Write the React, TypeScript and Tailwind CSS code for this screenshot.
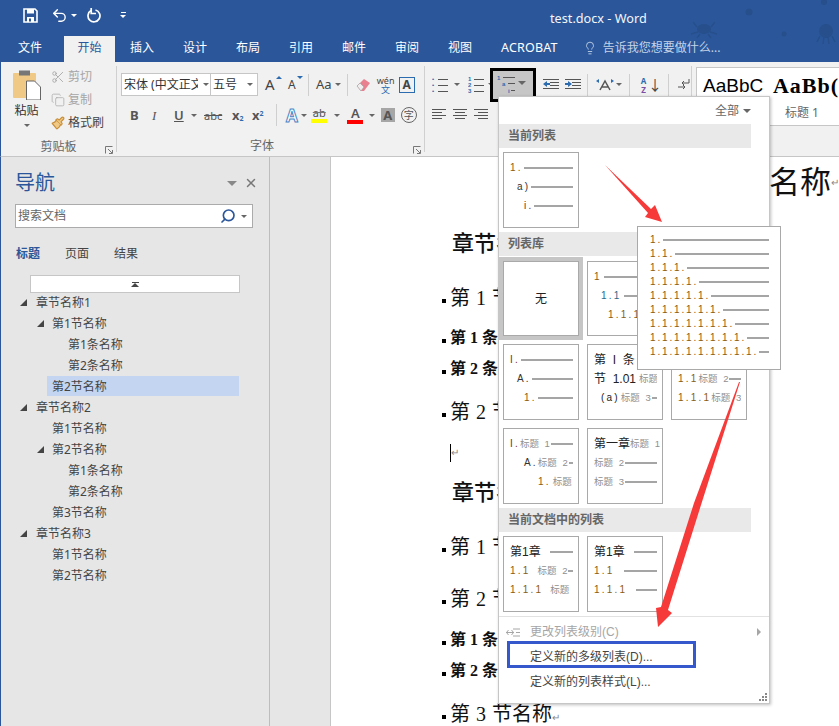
import React from 'react';
import { Undo2, Search, X, Lightbulb, Scissors, Copy, Paintbrush } from 'lucide-react';

const tabs = ['插入', '设计', '布局', '引用', '邮件', '审阅', '视图'];

const tree = [
  { text: '章节名称1', level: 'pl-[35px]', arrow: 'left-[19px]' },
  { text: '第1节名称', level: 'pl-[51px]', arrow: 'left-[36px]' },
  { text: '第1条名称', level: 'pl-[67px]' },
  { text: '第2条名称', level: 'pl-[67px]' },
  { text: '第2节名称', level: 'pl-[51px]', selected: true },
  { text: '章节名称2', level: 'pl-[35px]', arrow: 'left-[19px]' },
  { text: '第1节名称', level: 'pl-[51px]' },
  { text: '第2节名称', level: 'pl-[51px]', arrow: 'left-[36px]' },
  { text: '第1条名称', level: 'pl-[67px]' },
  { text: '第2条名称', level: 'pl-[67px]' },
  { text: '第3节名称', level: 'pl-[51px]' },
  { text: '章节名称3', level: 'pl-[35px]', arrow: 'left-[19px]' },
  { text: '第1节名称', level: 'pl-[51px]' },
  { text: '第2节名称', level: 'pl-[51px]' },
];

const Caret = ({ className = '' }: { className?: string }) => (
  <span className={`inline-block w-0 h-0 border-x-[3px] border-x-transparent border-t-[3px] border-t-[#666] ${className}`} />
);

const VDiv = ({ className = '' }: { className?: string }) => <span className={`w-px h-[22px] bg-[#cfcfcf] ${className}`} />;

const Launcher = ({ className = '' }: { className?: string }) => (
  <svg width="8" height="8" viewBox="0 0 8 8" className={`absolute ${className}`}>
    <path d="M0.5 7.5V0.5H7.5M3 3l4 4M7.5 4v3.5H4" fill="none" stroke="#777" />
  </svg>
);

// three short lines with a marker in front, for the list buttons
const ListIcon = ({ marks, color = '#2b6cb0' }: { marks: string[]; color?: string }) => (
  <svg width="16" height="17" viewBox="0 0 16 17">
    {marks.map((m, i) => (
      <g key={i}>
        <text x="0" y={5 + i * 6} fontSize="6" fontWeight="bold" fill={color} fontFamily="Liberation Sans">{m}</text>
        <rect x="6" y={3 + i * 6} width="10" height="1" fill="#555" />
      </g>
    ))}
  </svg>
);

const AlignIcon = ({ rows }: { rows: [number, number][] }) => (
  <svg width="15" height="11" viewBox="0 0 15 11">
    {rows.map(([x, w], i) => <rect key={i} x={x} y={i * 3 + 1} width={w} height="1" fill="#555" />)}
  </svg>
);

const IndentIcon = ({ flip = false }: { flip?: boolean }) => (
  <svg width="16" height="13" viewBox="0 0 16 13">
    <rect x="0" y="1" width="16" height="1" fill="#555" />
    <rect x="7" y="4" width="9" height="1" fill="#555" />
    <rect x="7" y="7" width="9" height="1" fill="#555" />
    <rect x="0" y="10" width="16" height="1" fill="#555" />
    {flip ? <path d="M0 5h3V3l4 3-4 3V7H0z" fill="#2b6cb0" /> : <path d="M7 5H4V3L0 6l4 3V7h3z" fill="#2b6cb0" />}
  </svg>
);

const Row = ({ text, pad = '', mid, midGap = '', gap = 'ml-[1px]', color = 'text-[#8a5d10]', big = false, line = true }: { text: string; pad?: string; mid?: string; midGap?: string; gap?: string; color?: string; big?: boolean; line?: boolean }) => (
  <div className={`flex items-center h-[19px] whitespace-nowrap overflow-hidden ${pad}`}>
    <span className={`leading-none whitespace-pre ${big ? 'text-[12px]' : 'text-[10px] tracking-[2.2px]'} ${color}`}>{text}</span>
    {mid && <span className={`text-[9.5px] [word-spacing:3px] text-[#8f8f8f] leading-none ${midGap}`}>{mid}</span>}
    {line && <span className={`flex-1 min-w-0 h-[2px] bg-[#a5a5a5] ${gap}`} />}
  </div>
);

const Thumb = ({ children, className = '' }: { children?: React.ReactNode; className?: string }) => (
  <div className={`w-[76px] h-[76px] border border-[#a9a9a9] bg-white pl-[6px] pr-[5px] pt-[5px] ${className}`}>{children}</div>
);

const MenuHead = ({ children }: { children: React.ReactNode }) => (
  <div className="w-[252px] h-[24px] bg-[#e9e9e9] flex items-center pl-[9px] text-[12px] font-bold text-[#666]">{children}</div>
);

const Bullet = () => <span className="w-[4px] h-[4px] bg-black mr-[4px] mt-[6px] shrink-0" />;

const Return = () => <span className="text-[10px] text-[#888] font-normal leading-none self-end mb-1">↵</span>;

const DocH1 = ({ className = '' }: { className?: string }) => (
  <div className={`pl-[121px] text-[22px] leading-[26px] font-medium text-[#111] flex ${className}`}>章节名称<Return /></div>
);

const DocH2 = ({ n, className = '' }: { n: string; className?: string }) => (
  <div className={`pl-[111px] text-[20px] leading-[26px] text-[#111] flex items-center whitespace-pre [word-spacing:1px] ${className}`}><Bullet />第 {n} 节名称<Return /></div>
);

const DocH3 = ({ n, className = '' }: { n: string; className?: string }) => (
  <div className={`pl-[111px] text-[16px] leading-[22px] font-bold text-[#111] flex items-center whitespace-pre ${className}`}><Bullet />第 {n} 条名称<Return /></div>
);

const App: React.FC = () => {
  return (
    <div className="relative w-[839px] h-[726px] overflow-hidden bg-white font-['Noto_Sans','Noto_Sans_CJK_SC',sans-serif]">
      {/* title bar + tabs */}
      <div className="relative h-[62px] bg-[#2b579a] text-white">
        <div className="h-[36px] flex items-center pl-[23px] pb-[6px]">
          <svg width="15" height="15" viewBox="0 0 15 15">
            <path d="M1 1h11l2 2v11H1z" fill="none" stroke="#fff" strokeWidth="1.6" />
            <rect x="4" y="1" width="7" height="4.5" fill="#fff" />
            <rect x="4" y="9" width="7" height="5" fill="#fff" />
            <rect x="6" y="10.5" width="2" height="3" fill="#2b579a" />
          </svg>
          <Undo2 size={17} strokeWidth={2} className="ml-[13px]" />
          <Caret className="ml-[3px] border-t-white" />
          <svg width="15" height="15" viewBox="0 0 15 15" className="ml-[9px]">
            <path d="M5 2.6A6 6 0 1 0 9.5 2" fill="none" stroke="#fff" strokeWidth="1.7" />
            <path d="M5.2 0v5.5H10" fill="none" stroke="#fff" strokeWidth="1.7" />
          </svg>
          <span className="ml-[19px] flex flex-col items-center gap-[2px]">
            <span className="w-[5px] h-px bg-white" />
            <Caret className="border-t-white" />
          </span>
        </div>
        <div className="absolute left-[550px] top-[9px] text-[12.7px] leading-[18px] font-['Noto_Sans',sans-serif] text-[#f4f6fa]">test.docx - Word</div>
        <svg width="170" height="50" viewBox="0 0 170 50" className="absolute left-[669px] top-[0px]" fill="#264f8c">
          <circle cx="80" cy="12" r="3.5" />
          <circle cx="115" cy="34" r="2.5" />
          <ellipse cx="35" cy="29" rx="7" ry="5" />
          <path d="M24 22l4 5M46 22l-4 5M22 34l7-2M48 34l-7-2M28 38l3-4M42 38l-3-4" stroke="#264f8c" strokeWidth="1.5" />
          <circle cx="157" cy="31" r="7" />
          <path d="M151 36l-3 6M155 37l-1 7M159 37l1 7M163 36l3 6" stroke="#264f8c" strokeWidth="1.5" />
          <circle cx="155" cy="2" r="3" />
        </svg>
        <div className="h-[26px] flex items-stretch text-[12px] pl-[18px] pb-[2px]">
          <div className="flex items-center w-[46px]">文件</div>
          <div className="w-[51px] h-[26px] bg-[#f1f1f1] text-[#2b579a] flex items-center justify-center pb-[2px]">开始</div>
          <div className="flex items-center pl-[15px]">
            {tabs.map((t) => <span key={t} className="w-[53px]">{t}</span>)}
          </div>
          <span className="flex items-center text-[12.5px] tracking-[0.2px]">ACROBAT</span>
          <div className="flex items-center ml-[25px] text-[#c5d3e8]">
            <Lightbulb size={14} strokeWidth={1.5} />
            <span className="ml-[6px] text-[12px]">告诉我您想要做什么...</span>
          </div>
        </div>
      </div>

      {/* ribbon */}
      <div className="h-[95px] bg-[#f1f1f1] border-b border-[#c6c6c6] border-l border-l-[#2b579a] flex text-[#444]">
        {/* clipboard */}
        <div className="relative w-[116px] border-r border-[#d0d0d0] my-[4px] mr-0 shrink-0">
          <div className="flex h-[72px]">
            <div className="w-[46px] flex flex-col items-center pt-[4px] pl-[5px]">
              <svg width="29" height="30" viewBox="0 0 29 30">
                <rect x="1" y="3" width="23" height="25" rx="1" fill="#efc985" />
                <rect x="7" y="0.5" width="11" height="5" fill="#777" />
                <path d="M14.5 11h8l6 6v13h-14z" fill="#fff" stroke="#666" />
              </svg>
              <span className="text-[12px] leading-[16px] mt-[3px] text-[#333]">粘贴</span>
              <Caret className="mt-[5px]" />
            </div>
            <div className="flex flex-col pl-[4px] mt-[-1px] text-[12px] text-[#a6a6a6] leading-[23px]">
              <div className="flex items-center gap-[3px]"><Scissors size={14} strokeWidth={1.5} />剪切</div>
              <div className="flex items-center gap-[3px]"><Copy size={14} strokeWidth={1.2} />复制</div>
              <div className="flex items-center gap-[3px] text-[#444]"><Paintbrush size={14} className="text-[#c98f3a]" fill="#efc985" />格式刷</div>
            </div>
          </div>
          <div className="text-center text-[12px] leading-[16px] text-[#666] pt-[1px]">剪贴板</div>
          <Launcher className="right-[3px] bottom-[-2px]" />
        </div>

        {/* font */}
        <div className="relative w-[308px] border-r border-[#d0d0d0] my-[4px] shrink-0 pl-[4px]">
          <div className="flex items-center h-[23px] mt-[7px] text-[#444]">
            <div className="w-[90px] h-[23px] bg-white border border-[#c6c6c6] flex items-center pl-[2px] text-[12px] text-[#333] overflow-hidden whitespace-nowrap">
              <span className="w-[74px] overflow-hidden">宋体 (中文正文)</span><Caret className="ml-[5px]" />
            </div>
            <div className="w-[47px] h-[23px] bg-white border border-[#c6c6c6] border-l-0 flex items-center pl-[2px] text-[12px] text-[#333] justify-between pr-[4px]">
              五号<Caret />
            </div>
            <span className="ml-[7px] text-[15px] w-[15px] leading-none relative">A<span className="absolute right-[-2px] top-[-1px] w-0 h-0 border-x-[3px] border-x-transparent border-b-[3px] border-b-[#2b6cb0]" /></span>
            <span className="ml-[8px] text-[12px] w-[15px] leading-none relative">A<span className="absolute right-[0px] top-[-3px] w-0 h-0 border-x-[3px] border-x-transparent border-t-[3px] border-t-[#2b6cb0]" /></span>
            <VDiv className="ml-[5px]" />
            <span className="ml-[7px] text-[13px]">Aa</span>
            <Caret className="ml-[3px]" />
            <VDiv className="ml-[6px]" />
            <svg width="15" height="15" viewBox="0 0 15 15" className="ml-[8px]">
              <path d="M1 9l7-7 6 4-6 8H5z" fill="#e8808f" />
              <path d="M1 9l3-3 4 4-3 4z" fill="#eee" stroke="#999" strokeWidth=".6" />
            </svg>
            <span className="ml-[7px] w-[16px] flex flex-col items-center leading-none">
              <span className="text-[9px] text-[#444] leading-[9px]">wén</span>
              <span className="text-[9px] text-[#2b6cb0] leading-[9px]">文</span>
            </span>
            <span className="ml-[5px] w-[16px] h-[16px] border border-[#2b6cb0] flex items-center justify-center text-[12px] font-bold leading-none">A</span>
          </div>
          <div className="flex items-center h-[24px] mt-[7px] text-[#555]">
            <span className="ml-[9px] w-[22px] text-[13px] font-bold leading-none">B</span>
            <span className="w-[22px] text-[13px] italic font-['Liberation_Serif',serif] leading-none">I</span>
            <span className="w-[17px] text-[13px] underline font-semibold leading-none">U</span>
            <Caret />
            <span className="ml-[7px] w-[20px] text-[11px] line-through leading-none">abc</span>
            <span className="ml-[8px] w-[20px] text-[13px] font-bold leading-none">x<sub className="text-[7px] text-[#2b6cb0]">2</sub></span>
            <span className="w-[18px] text-[13px] font-bold leading-none">x<sup className="text-[7px] text-[#2b6cb0]">2</sup></span>
            <VDiv className="ml-[6px]" />
            <span className="ml-[9px] text-[17px] font-bold leading-none text-white [-webkit-text-stroke:1px_#4a86c5]">A</span>
            <Caret className="ml-[3px]" />
            <span className="ml-[4px] w-[17px] flex flex-col items-center leading-none">
              <span className="text-[11px] leading-[12px] line-through decoration-[#777]">ab</span>
              <span className="w-[16px] h-[4px] bg-[#ffff00]" />
            </span>
            <Caret className="ml-[6px]" />
            <span className="ml-[7px] w-[17px] flex flex-col items-center leading-none">
              <span className="text-[13px] font-semibold leading-[12px]">A</span>
              <span className="w-[16px] h-[4px] bg-[#ff0000] mt-[1px]" />
            </span>
            <Caret className="ml-[5px]" />
            <span className="ml-[6px] w-[14px] h-[14px] bg-[#a6a6a6] flex items-center justify-center text-[13px] font-bold leading-none">A</span>
            <span className="ml-[6px] w-[16px] h-[16px] rounded-full border border-[#666] flex items-center justify-center text-[10px] leading-none">字</span>
          </div>
          <div className="absolute left-[133px] bottom-[-2px] text-[12px] leading-[16px] text-[#666]">字体</div>
          <Launcher className="right-[3px] bottom-[-2px]" />
        </div>

        {/* paragraph */}
        <div className="w-[267px] border-r border-[#d0d0d0] my-[4px] shrink-0 pl-[7px]">
          <div className="flex items-center h-[23px] mt-[7px]">
            <ListIcon marks={['•', '•', '•']} />
            <Caret className="ml-[6px]" />
            <span className="ml-[8px]"><ListIcon marks={['1', '2', '3']} /></span>
            <Caret className="ml-[4px]" />
            <span className="ml-[49px]"><IndentIcon /></span>
            <span className="ml-[6px]"><IndentIcon flip /></span>
            <VDiv className="ml-[6px]" />
            <svg width="20" height="16" viewBox="0 0 20 16" className="ml-[7px]">
              <path d="M5 13L10 4l5 9M7 10h6" fill="none" stroke="#555" strokeWidth="1.5" />
              <path d="M1 4l3-2v4zM19 4l-3-2v4z" fill="#2b6cb0" />
            </svg>
            <Caret className="ml-[1px]" />
            <VDiv className="ml-[7px]" />
            <span className="ml-[9px] w-[9px] flex flex-col items-center text-[8px] font-bold leading-[9px]">
              <span className="text-[#2b6cb0]">A</span><span className="text-[#7b4ea3]">Z</span>
            </span>
            <span className="text-[14px] leading-none">↓</span>
            <VDiv className="ml-[6px]" />
            <svg width="13" height="14" viewBox="0 0 13 14" className="ml-[8px]">
              <path d="M12 1v4H5M5 5l2-2M5 5l2 2" fill="none" stroke="#555" />
              <path d="M1 9h7M8 9l-2-2M8 9l-2 2" fill="none" stroke="#555" />
            </svg>
          </div>
          <div className="flex items-center h-[24px] mt-[5px] gap-[6px]">
            <AlignIcon rows={[[0, 14], [0, 10], [0, 14], [0, 10]]} />
            <AlignIcon rows={[[0, 14], [2, 10], [0, 14], [2, 10]]} />
            <AlignIcon rows={[[0, 14], [4, 10], [0, 14], [4, 10]]} />
          </div>
        </div>

        {/* styles gallery */}
        <div className="pl-[4px] pt-[5px] flex-1 overflow-hidden">
          <div className="h-[59px] bg-white border border-[#c6c6c6] border-r-0 flex whitespace-nowrap overflow-hidden">
            <div className="w-[79px] pl-[6px] pt-[4px]">
              <div className="text-[19px] leading-[28px] text-black font-['Liberation_Sans',sans-serif]">AaBbC</div>
            </div>
            <div className="pt-[4px]">
              <div className="text-[22px] leading-[28px] font-bold tracking-[1px] text-black font-['Liberation_Serif',serif]">AaBb(</div>
              <div className="text-[12px] leading-[16px] pl-[12px] mt-[5px] text-[#666]">标题 1</div>
            </div>
          </div>
        </div>
      </div>

      {/* body */}
      <div className="h-[569px] flex border-l border-l-[#2b579a]">
        <div className="relative w-[269px] h-full bg-[#e6e6e6] border-r border-[#bdbdbd] shrink-0">
          <div className="flex items-center h-[37px] pl-[14px] pt-[15px] pr-[11px] justify-between text-[20px] text-[#2b579a]">
            <span className="leading-none">导航</span>
            <span className="flex items-center gap-[7px] text-[#777]">
              <Caret className="border-x-[5px] border-t-[5px] border-t-[#888]" />
              <X size={14} strokeWidth={2.5} />
            </span>
          </div>
          <div className="ml-[14px] mt-[10px] w-[238px] h-[24px] bg-white border border-[#ababab] flex items-center pl-[2px] text-[12px] text-[#666]">
            <span className="flex-1">搜索文档</span>
            <Search size={16} strokeWidth={2.5} className="text-[#2b579a] -scale-x-100" />
            <Caret className="mx-[5px]" />
          </div>
          <div className="flex items-center mt-[16px] pl-[15px] h-[20px] text-[12px] text-[#444]">
            <span className="w-[49px] font-bold text-[#2b579a]">标题</span>
            <span className="w-[49px]">页面</span>
            <span>结果</span>
          </div>
          <div className="ml-[29px] mt-[11px] w-[210px] h-[18px] bg-white border border-[#c6c6c6] flex flex-col items-center justify-center">
            <span className="w-[7px] h-px bg-[#444]" />
            <span className="w-0 h-0 border-x-[4px] border-x-transparent border-b-[4px] border-b-[#444]" />
          </div>
          <div className="text-[12px] text-[#444] mt-[-1px]">
            {tree.map((r, i) => (
              <div key={i} className={`relative h-[21px] flex items-center ${r.level}`}>
                {r.selected && <span className="absolute left-[46px] top-0 w-[192px] h-[20px] bg-[#c3d5f0]" />}
                {r.arrow && (
                  <svg width="7" height="7" viewBox="0 0 7 7" className={`absolute top-[7px] ${r.arrow}`}>
                    <path d="M7 0v7H0z" fill="#444" />
                  </svg>
                )}
                <span className="relative">{r.text}</span>
              </div>
            ))}
          </div>
        </div>

        {/* document */}
        <div className="flex-1 bg-[#e6e6e6] pl-[60px] overflow-hidden">
          <div className="h-full bg-white border-l border-[#c6c6c6] pl-0 font-['Liberation_Serif','Noto_Sans_CJK_SC',serif]">
            <div className="pl-[400px] pt-[10px] text-[31px] leading-[32px] text-[#111] flex whitespace-nowrap">
              <span className="ml-[38px]">名称</span><span className="text-[10px] text-[#888] self-end">↵</span>
            </div>
            <DocH1 className="mt-[32px]" />
            <DocH2 n="1" className="mt-[28px]" />
            <DocH3 n="1" className="mt-[16px]" />
            <DocH3 n="2" className="mt-[9px]" />
            <DocH2 n="2" className="mt-[19px]" />
            <div className="pl-[119px] mt-[19px] h-[18px] flex items-center">
              <span className="w-px h-[18px] bg-black" />
              <span className="text-[10px] text-[#888] leading-none">↵</span>
            </div>
            <DocH1 className="mt-[18px]" />
            <DocH2 n="1" className="mt-[28px]" />
            <DocH2 n="2" className="mt-[26px]" />
            <DocH3 n="1" className="mt-[17px]" />
            <DocH3 n="2" className="mt-[9px]" />
            <DocH2 n="3" className="mt-[19px]" />
          </div>
        </div>
      </div>

      {/* multilevel list button, highlighted */}
      <div className="absolute left-[490px] top-[68px] w-[46px] h-[34px] border-[3px] border-black bg-[#c6c6c6] flex items-start pt-[3px] pl-[4px]">
        <svg width="20" height="20" viewBox="0 0 20 20">
          <text x="0" y="6" fontSize="6" fontWeight="bold" fill="#2b6cb0" fontFamily="Liberation Sans">1</text>
          <rect x="6" y="3" width="12" height="1" fill="#555" />
          <text x="5" y="12" fontSize="6" fontWeight="bold" fill="#2b6cb0" fontFamily="Liberation Sans">a</text>
          <rect x="11" y="9" width="7" height="1" fill="#555" />
          <text x="11" y="19" fontSize="6" fontWeight="bold" fill="#2b6cb0" fontFamily="Liberation Sans">i</text>
          <rect x="14" y="16" width="4" height="1" fill="#555" />
        </svg>
        <Caret className="mt-[7px] ml-[1px] border-x-[4px] border-t-[4px] border-t-[#444]" />
      </div>

      {/* dropdown */}
      <div className="absolute left-[498px] top-[96px] w-[272px] h-[608px] bg-white border border-[#c6c6c6] shadow-[1px_1px_3px_rgba(0,0,0,0.25)] font-['Liberation_Sans','Noto_Sans_CJK_SC',sans-serif]">
        <div className="h-[27px] flex items-center justify-end pr-[18px] text-[12px] text-[#666] gap-[4px]">全部<Caret className="border-x-[4px] border-t-[4px]" /></div>
        <MenuHead>当前列表</MenuHead>
        <div className="pl-[4px] pt-[4px]">
          <Thumb>
            <Row text="1." />
            <Row text="a)" pad="pl-[7px]" color="text-[#333]" />
            <Row text="i." pad="pl-[14px]" color="text-[#7a2a1a]" />
          </Thumb>
        </div>
        <div className="mt-[4px]"><MenuHead>列表库</MenuHead></div>
        <div className="grid grid-cols-[76px_76px_76px] gap-x-2 gap-y-2 pl-[4px] pt-[5px]">
          <Thumb className="outline-4 outline-[#c6c6c6] flex items-center justify-center !p-0 !h-[75px]"><span className="text-[12px] text-[#222]">无</span></Thumb>
          <Thumb className="!h-[75px]">
            <Row text="1" gap="ml-[2px]" color="text-[#8a5d10]" />
            <Row text="1.1" pad="pl-[7px]" gap="ml-[2px]" color="text-[#2b6a8a]" />
            <Row text="1.1.1" pad="pl-[14px]" gap="ml-[2px]" />
          </Thumb>
          <Thumb className="!h-[75px]" />
          <Thumb>
            <Row text="I." color="text-[#7a2a1a]" />
            <Row text="A." pad="pl-[7px]" color="text-[#333]" />
            <Row text="1." pad="pl-[14px]" />
          </Thumb>
          <Thumb>
            <Row text="第  I  条" big color="text-[#222]" line={false} />
            <Row text="节  1.01" big color="text-[#222]" mid="标题" midGap="ml-[3px]" line={false} />
            <Row text="(a)" pad="pl-[7px]" color="text-[#222]" mid="标题 3" midGap="ml-[1px]" />
          </Thumb>
          <Thumb>
            <Row text="1" mid="标题 1" midGap="ml-[10px]" />
            <Row text="1.1" mid="标题 2" />
            <Row text="1.1.1" mid="标题 3" />
          </Thumb>
          <Thumb>
            <Row text="I." color="text-[#7a2a1a]" mid="标题 1" />
            <Row text="A." pad="pl-[14px]" color="text-[#333]" mid="标题 2" />
            <Row text="1." pad="pl-[28px]" mid="标题" midGap="ml-[2px]" line={false} />
          </Thumb>
          <Thumb>
            <Row text="第一章" big color="text-[#222]" pad="mr-[-4px]" mid="标题 1" line={false} />
            <Row text="" mid="标题 2" />
            <Row text="" mid="标题 3" />
          </Thumb>
        </div>
        <div className="mt-[4px]"><MenuHead>当前文档中的列表</MenuHead></div>
        <div className="flex gap-2 pl-[4px] pt-[4px]">
          <Thumb>
            <Row text="第1章" big color="text-[#222]" gap="ml-[9px]" />
            <Row text="1.1" mid="标题 2" midGap="ml-[7px]" />
            <Row text="1.1.1" mid="标题 3" midGap="ml-[7px]" line={false} />
          </Thumb>
          <Thumb>
            <Row text="第1章" big color="text-[#222]" gap="ml-[9px]" />
            <Row text="1.1" gap="ml-[9px]" />
            <Row text="1.1.1" gap="ml-[9px]" />
          </Thumb>
        </div>
        <div className="mt-[4px] border-t border-[#e2e2e2]" />
        <div className="h-[26px] flex items-center pl-[31px] pr-[8px] text-[12px] text-[#a6a6a6] relative mt-[2px]">
          <svg width="14" height="9" viewBox="0 0 14 9" className="absolute left-[7px]" fill="none" stroke="#a6a6a6">
            <path d="M0 4.5h8M2.5 2L0.5 4.5 2.5 7M5.5 2l2 2.5-2 2.5" />
            <path d="M7 1h7M10 4.5h4M7 8h7" />
          </svg>
          <span className="flex-1">更改列表级别(C)</span>
          <span className="w-0 h-0 border-y-[4px] border-y-transparent border-l-[4px] border-l-[#a6a6a6]" />
        </div>
        <div className="h-[24px] flex items-center pl-[31px] text-[12px] text-[#444]">定义新的多级列表(D)...</div>
        <div className="h-[25px] flex items-center pl-[31px] text-[12px] text-[#444]">定义新的列表样式(L)...</div>
        <svg width="8" height="8" viewBox="0 0 8 8" className="absolute right-[2px] bottom-[2px]" fill="#888">
          <rect x="6" y="0" width="2" height="2" /><rect x="3" y="3" width="2" height="2" /><rect x="6" y="3" width="2" height="2" />
          <rect x="0" y="6" width="2" height="2" /><rect x="3" y="6" width="2" height="2" /><rect x="6" y="6" width="2" height="2" />
        </svg>
      </div>

      {/* callout with the nine level list */}
      <div className="absolute left-[637px] top-[226px] w-[144px] h-[144px] bg-white border border-[#a9a9a9] pl-[12px] pr-[11px] pt-[6px] font-['Liberation_Sans',sans-serif]">
        {[1, 2, 3, 4, 5, 6, 7, 8, 9].map((n) => (
          <div key={n} className="h-[14px] flex items-center whitespace-nowrap">
            <span className="text-[10px] tracking-[1.83px] leading-none text-[#8a5d10]">{'1.'.repeat(n)}</span>
            <span className="flex-1 h-[2px] bg-[#a5a5a5] ml-[1px]" />
          </div>
        ))}
      </div>

      {/* blue highlight on the menu item */}
      <div className="absolute left-[507px] top-[641px] w-[189px] h-[27px] border-[3px] border-[#3558cc]" />

      {/* red arrows */}
      <svg width="839" height="726" viewBox="0 0 839 726" className="absolute inset-0 pointer-events-none">
        <polygon points="605,165 651,209 655,205 662,222 645,217 648,213" fill="#f63a3a" />
        <polygon points="740,382 739,382 694,503 661,607 656,608 658,627 672,613 668,610 701,505" fill="#f63a3a" />
      </svg>
    </div>
  );
};

export default App;
